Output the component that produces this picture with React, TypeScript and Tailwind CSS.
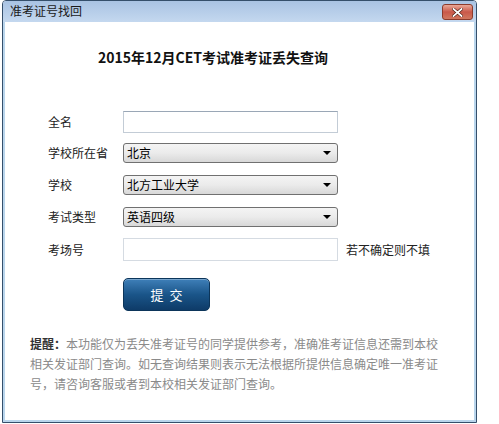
import { ChangeEvent, useState } from "react";

const font = { fontFamily: '"Noto Sans CJK SC", "Noto Sans", sans-serif' };

type SelectProps = {
  value: string;
  options: string[];
  onChange: (v: string) => void;
};

const Select = ({ value, options, onChange }: SelectProps) => (
  <div className="relative flex h-[20px] w-[215px] items-center rounded-[3px] border border-[#707070] bg-gradient-to-b from-[#f4f4f4] via-[#ebebeb] to-[#d8d8d8] pl-[3px]">
    <span className="text-[12px] leading-[18px] text-black">{value}</span>
    <select
      value={value}
      onChange={(e: ChangeEvent<HTMLSelectElement>) => onChange(e.target.value)}
      className="absolute inset-0 h-full w-full cursor-pointer appearance-none opacity-0"
      style={font}
    >
      {options.map((o) => (
        <option key={o}>{o}</option>
      ))}
    </select>
    <span className="pointer-events-none absolute right-[6px] top-[7px] h-0 w-0 border-x-[4px] border-t-[4px] border-x-transparent border-t-black" />
  </div>
);

const Row = ({ label, children }: { label: string; children: React.ReactNode }) => (
  <div className="flex items-center">
    <span className="w-[75px] text-[12px] text-[#222]">{label}</span>
    {children}
  </div>
);

export default function App() {
  const [form, setForm] = useState({
    name: "",
    province: "北京",
    school: "北方工业大学",
    type: "英语四级",
    room: "",
  });

  return (
    <div className="h-[424px] w-[499px] overflow-hidden bg-white" style={font}>
      <div className="ml-[2px] flex h-[423px] w-[475px] flex-col rounded-t-[4px] border border-[#354f6b]">
        {/* title bar */}
        <div className="flex h-[21px] items-start justify-between rounded-t-[3px] bg-gradient-to-b from-[#a9c3e3] to-[#c4d8ef] pl-[7px] pr-[3px]">
          <span className="pt-[2px] text-[12px] leading-[16px] text-[#1a1a1a]">准考证号找回</span>
          <button className="mt-[3px] flex h-[16px] w-[31px] items-center justify-center rounded-[3px] border border-[#8c3b2c] bg-gradient-to-b from-[#e9a898] via-[#c9584a] to-[#d1775f]">
            <svg width="11" height="9" viewBox="0 0 11 9">
              <path d="M1.5 1 L9.5 8 M9.5 1 L1.5 8" stroke="#4a1a10" strokeWidth="3" strokeLinecap="square" />
              <path d="M1.5 1 L9.5 8 M9.5 1 L1.5 8" stroke="#ffffff" strokeWidth="1.8" strokeLinecap="square" />
            </svg>
          </button>
        </div>

        {/* body */}
        <div className="flex flex-1 flex-col border-x-2 border-b-2 border-[#b9d5ec] bg-white">
          <h1 className="ml-[93px] mt-[25px] text-[14px] font-bold leading-[20px] text-[#111]">
            2015年12月CET考试准考证丢失查询
          </h1>

          <div className="ml-[43px] mt-[44px] flex flex-col">
            <Row label="全名">
              <input
                value={form.name}
                onChange={(e) => setForm({ ...form, name: e.target.value })}
                className="h-[22px] w-[215px] border border-[#c3ccd6] border-t-[#9aa7b6] px-1 text-[12px] outline-none"
              />
            </Row>
            <div className="mt-[10px]">
              <Row label="学校所在省">
                <Select value={form.province} options={["北京"]} onChange={(v) => setForm({ ...form, province: v })} />
              </Row>
            </div>
            <div className="mt-[12px]">
              <Row label="学校">
                <Select value={form.school} options={["北方工业大学"]} onChange={(v) => setForm({ ...form, school: v })} />
              </Row>
            </div>
            <div className="mt-[12px]">
              <Row label="考试类型">
                <Select value={form.type} options={["英语四级", "英语六级"]} onChange={(v) => setForm({ ...form, type: v })} />
              </Row>
            </div>
            <div className="mt-[11px]">
              <Row label="考场号">
                <input
                  value={form.room}
                  onChange={(e) => setForm({ ...form, room: e.target.value })}
                  className="h-[23px] w-[215px] border border-[#d5dbe2] px-1 text-[12px] outline-none"
                />
                <span className="ml-[8px] text-[12px] text-[#222]">若不确定则不填</span>
              </Row>
            </div>

            <button className="ml-[75px] mt-[17px] h-[33px] w-[87px] rounded-[5px] border border-[#0c355a] bg-gradient-to-b from-[#3f80b9] via-[#1a5589] to-[#0e3b68] text-[13px] tracking-[6px] text-white shadow-[inset_0_1px_0_rgba(255,255,255,0.3)]">
              <span className="pl-[6px]">提交</span>
            </button>
          </div>

          <p className="ml-[25px] mt-[23px] text-[12px] leading-[20px] text-[#8a8a8a]">
            <b className="text-[#333]">提醒：</b>本功能仅为丢失准考证号的同学提供参考，准确准考证信息还需到本校
            <br />
            相关发证部门查询。如无查询结果则表示无法根据所提供信息确定唯一准考证
            <br />
            号，请咨询客服或者到本校相关发证部门查询。
          </p>
        </div>
      </div>
    </div>
  );
}
